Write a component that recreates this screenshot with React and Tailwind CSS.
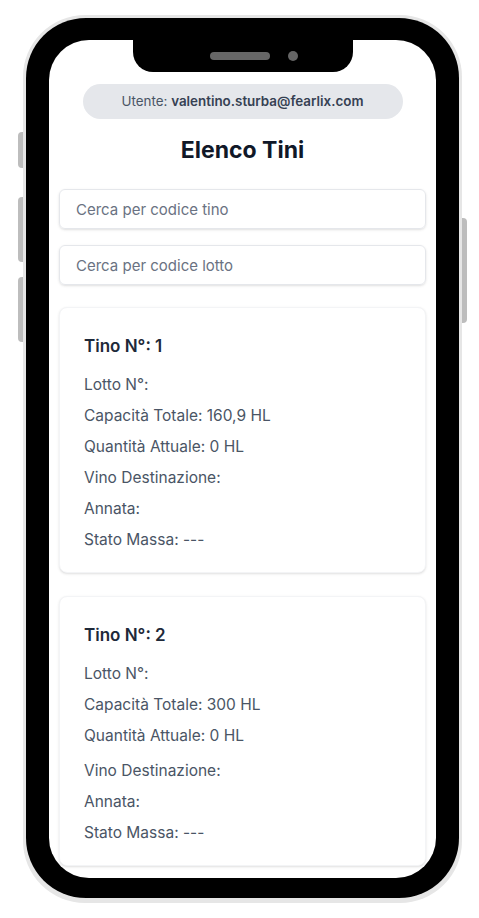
import React from "react";

const tini = [
  {
    numero: 1,
    lotto: "",
    capacita: "160,9 HL",
    quantita: "0 HL",
    vino: "",
    annata: "",
    stato: "---",
  },
  {
    numero: 2,
    lotto: "",
    capacita: "300 HL",
    quantita: "0 HL",
    vino: "",
    annata: "",
    stato: "---",
  },
];

const TinoCard = ({ tino, extraGap }) => {
  return (
    <div className="bg-white border border-gray-100 rounded-lg shadow-sm px-6 pt-6 pb-[21px] mb-[23px]">
      <h2 className="text-[17px] leading-[28px] font-semibold text-gray-800 mb-[13px] font-['Inter',sans-serif]">
        Tino N°: {tino.numero}
      </h2>
      <div className="flex flex-col gap-2 text-[15.5px] leading-[23px] text-gray-600 font-['Inter',sans-serif]">
        <p>Lotto N°: {tino.lotto}</p>
        <p>Capacità Totale: {tino.capacita}</p>
        <p>Quantità Attuale: {tino.quantita}</p>
        <p className={extraGap ? "mt-1" : ""}>Vino Destinazione: {tino.vino}</p>
        <p>Annata: {tino.annata}</p>
        <p>Stato Massa: {tino.stato}</p>
      </div>
    </div>
  );
};

const App = () => {
  return (
    <div className="min-h-screen bg-white pt-[15px] pl-[23px]">
      <div className="relative w-[439px] h-[888px]">
        {/* side buttons */}
        <div className="absolute left-[-5px] top-[117px] w-[5px] h-[36px] bg-[#bdbdbd] rounded-l-sm" />
        <div className="absolute left-[-5px] top-[182px] w-[5px] h-[65px] bg-[#bdbdbd] rounded-l-sm" />
        <div className="absolute left-[-5px] top-[262px] w-[5px] h-[65px] bg-[#bdbdbd] rounded-l-sm" />
        <div className="absolute right-[-5px] top-[203px] w-[5px] h-[105px] bg-[#bdbdbd] rounded-r-sm" />

        <div className="h-full rounded-[62px] bg-[#e6e6e6] p-[3px] pb-[5px]">
          <div className="h-full rounded-[60px] bg-black pt-[22px] px-[23px] pb-[20px]">
            <div className="relative h-full rounded-[40px] bg-white overflow-hidden">
              {/* notch */}
              <div className="absolute top-0 left-1/2 -translate-x-1/2 w-[220px] h-[32px] bg-black rounded-b-[20px] flex items-center pl-[77px] gap-[18px] z-10">
                <div className="w-[60px] h-[8px] rounded-full bg-[#666666]" />
                <div className="w-[10px] h-[10px] rounded-full bg-[#666666]" />
              </div>

              <div className="px-[10px] pt-[44px]">
                <div className="max-w-xs mx-auto h-[35px] rounded-full bg-gray-200 flex items-center justify-center text-[13.4px] text-gray-600 font-['Inter',sans-serif]">
                  Utente:&nbsp;<span className="font-semibold text-gray-700">valentino.sturba@fearlix.com</span>
                </div>

                <h1 className="mt-[16px] text-center text-[23px] leading-[30px] font-bold text-gray-900 font-['Inter',sans-serif]">
                  Elenco Tini
                </h1>

                <div className="mt-[24px] flex flex-col gap-4">
                  <input
                    type="text"
                    placeholder="Cerca per codice tino"
                    className="w-full h-[40px] px-4 border border-gray-200 rounded-md shadow-sm text-[15px] placeholder-gray-500 font-['Inter',sans-serif] outline-none"
                  />
                  <input
                    type="text"
                    placeholder="Cerca per codice lotto"
                    className="w-full h-[40px] px-4 border border-gray-200 rounded-md shadow-sm text-[15px] placeholder-gray-500 font-['Inter',sans-serif] outline-none"
                  />
                </div>

                <div className="mt-[22px]">
                  {tini.map((tino) => (
                    <TinoCard key={tino.numero} tino={tino} extraGap={tino.numero === 2} />
                  ))}
                </div>
              </div>
            </div>
          </div>
        </div>
      </div>
    </div>
  );
};

export default App;
